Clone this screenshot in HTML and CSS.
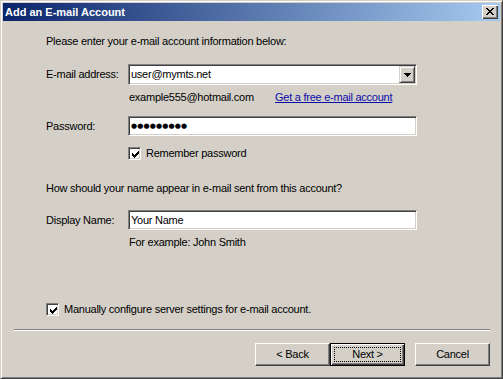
FILE: index.html
```html
<!DOCTYPE html>
<html lang="en">
<head>
  <meta charset="UTF-8" />
  <title>Add an E-mail Account</title>
  <link rel="stylesheet" href="styles.css">
</head>
<body>

  <div class="window">
    <div class="titlebar">
      <span class="title">Add an E-mail Account</span>
      <span class="close-btn">
        <svg width="8" height="7" viewBox="0 0 8 7" shape-rendering="crispEdges">
          <rect x="0" y="0" width="2" height="1"/><rect x="6" y="0" width="2" height="1"/>
          <rect x="1" y="1" width="2" height="1"/><rect x="5" y="1" width="2" height="1"/>
          <rect x="2" y="2" width="4" height="1"/>
          <rect x="3" y="3" width="2" height="1"/>
          <rect x="2" y="4" width="4" height="1"/>
          <rect x="1" y="5" width="2" height="1"/><rect x="5" y="5" width="2" height="1"/>
          <rect x="0" y="6" width="2" height="1"/><rect x="6" y="6" width="2" height="1"/>
        </svg>
      </span>
    </div>

    <div class="content">
      <div class="form">
        <p class="intro">Please enter your e-mail account information below:</p>

        <div class="field-row row-email">
          <label class="field-label" for="email">E-mail address:</label>
          <div class="combo">
            <input class="combo-input" id="email" type="text" value="user@mymts.net" />
            <span class="combo-btn">
              <svg width="7" height="4" viewBox="0 0 7 4" shape-rendering="crispEdges">
                <rect x="0" y="0" width="7" height="1"/>
                <rect x="1" y="1" width="5" height="1"/>
                <rect x="2" y="2" width="3" height="1"/>
                <rect x="3" y="3" width="1" height="1"/>
              </svg>
            </span>
          </div>
        </div>

        <div class="hint-row">
          <span class="example">example555@hotmail.com</span>
          <a class="link" href="#">Get a free e-mail account</a>
        </div>

        <div class="field-row row-password">
          <label class="field-label">Password:</label>
          <div class="textbox password">●●●●●●●●●</div>
        </div>

        <div class="check check-remember">
          <span class="checkbox">
            <svg width="7" height="7" viewBox="0 0 7 7" shape-rendering="crispEdges">
              <rect x="6" y="0" width="1" height="1"/>
              <rect x="5" y="1" width="2" height="1"/>
              <rect x="0" y="2" width="1" height="1"/><rect x="4" y="2" width="3" height="1"/>
              <rect x="0" y="3" width="2" height="1"/><rect x="3" y="3" width="3" height="1"/>
              <rect x="0" y="4" width="5" height="1"/>
              <rect x="1" y="5" width="3" height="1"/>
              <rect x="2" y="6" width="1" height="1"/>
            </svg>
          </span>
          <span>Remember password</span>
        </div>

        <p class="question">How should your name appear in e-mail sent from this account?</p>

        <div class="field-row row-display">
          <label class="field-label" for="display">Display Name:</label>
          <input class="textbox" id="display" type="text" value="Your Name" />
        </div>

        <p class="hint">For example: John Smith</p>

        <div class="check check-manual">
          <span class="checkbox">
            <svg width="7" height="7" viewBox="0 0 7 7" shape-rendering="crispEdges">
              <rect x="6" y="0" width="1" height="1"/>
              <rect x="5" y="1" width="2" height="1"/>
              <rect x="0" y="2" width="1" height="1"/><rect x="4" y="2" width="3" height="1"/>
              <rect x="0" y="3" width="2" height="1"/><rect x="3" y="3" width="3" height="1"/>
              <rect x="0" y="4" width="5" height="1"/>
              <rect x="1" y="5" width="3" height="1"/>
              <rect x="2" y="6" width="1" height="1"/>
            </svg>
          </span>
          <span>Manually configure server settings for e-mail account.</span>
        </div>
      </div>

      <div class="separator"></div>

      <div class="buttons">
        <button class="btn" type="button">&lt; Back</button>
        <button class="btn btn-default" type="button"><span class="focus">Next &gt;</span></button>
        <button class="btn btn-cancel" type="button">Cancel</button>
      </div>
    </div>
  </div>

</body>
</html>
```

FILE: styles.css
```css
html, body {
  margin: 0;
  padding: 0;
  background: #d4d0c8;
}
body {
  font-family: "Liberation Sans", Arial, sans-serif;
  font-size: 11px;
  line-height: 13px;
  letter-spacing: -0.25px;
  color: #000;
}
.window {
  width: 503px;
  height: 379px;
  box-sizing: border-box;
  background: #d4d0c8;
  border: 1px solid;
  border-color: #d4d0c8 #404040 #404040 #d4d0c8;
  box-shadow: inset 1px 1px #fff, inset -1px -1px #808080;
  padding: 2px;
}
.titlebar {
  height: 18px;
  display: flex;
  align-items: center;
  justify-content: space-between;
  padding: 0 2px;
  background: linear-gradient(to right, #0a246a, #a6caf0);
  color: #fff;
}
.title {
  font-weight: bold;
  font-size: 11px;
  letter-spacing: 0;
}
.close-btn {
  width: 16px;
  height: 14px;
  box-sizing: border-box;
  background: #d4d0c8;
  box-shadow: inset 1px 1px #fff, inset -1px -1px #404040, inset -2px -2px #808080;
  display: flex;
  align-items: center;
  justify-content: center;
  padding: 0 1px 1px 0;
}
.close-btn svg, .combo-btn svg, .checkbox svg {
  display: block;
  fill: #000;
}

.content {
  padding: 0 10px 0 11px;
}
.form {
  padding-left: 32px;
}
.intro, .question, .hint {
  margin: 0;
}
.intro {
  padding-top: 14px;
}
.field-row {
  display: grid;
  grid-template-columns: 82px 289px;
  align-items: center;
}
.row-email {
  margin-top: 16px;
}
.row-password {
  margin-top: 12px;
}
.row-display {
  margin-top: 15px;
}

.combo {
  height: 21px;
  box-sizing: border-box;
  background: #fff;
  border: 1px solid;
  border-color: #808080 #fff #fff #808080;
  box-shadow: inset 1px 1px #404040, inset -1px -1px #d4d0c8;
  padding: 1px;
  display: flex;
}
.combo-input {
  flex: 1;
  min-width: 0;
  border: none;
  outline: none;
  background: transparent;
  font: inherit;
  letter-spacing: inherit;
  padding: 0 0 0 1px;
  margin: 0;
}
.combo-btn {
  width: 16px;
  height: 17px;
  box-sizing: border-box;
  background: #d4d0c8;
  border: 1px solid;
  border-color: #d4d0c8 #404040 #404040 #d4d0c8;
  box-shadow: inset 1px 1px #fff, inset -1px -1px #808080;
  display: flex;
  align-items: center;
  justify-content: center;
}

.textbox {
  height: 20px;
  width: 289px;
  box-sizing: border-box;
  background: #fff;
  border: 1px solid;
  border-color: #808080 #fff #fff #808080;
  box-shadow: inset 1px 1px #404040, inset -1px -1px #d4d0c8;
  font: inherit;
  letter-spacing: inherit;
  color: #000;
  padding: 0 0 0 2px;
  margin: 0;
  outline: none;
}
.password {
  display: flex;
  align-items: center;
  font-family: "DejaVu Sans", sans-serif;
  font-size: 7px;
  letter-spacing: 0.15px;
}

.hint-row {
  margin-top: 6px;
  padding-left: 83px;
  display: flex;
}
.example {
  width: 146px;
}
.link {
  color: #0b0ba8;
  text-decoration: underline;
}
.hint {
  margin-top: 6px;
  padding-left: 83px;
}
.question {
  margin-top: 22px;
}

.check {
  display: flex;
  align-items: center;
  gap: 5px;
  height: 13px;
}
.check-remember {
  margin-top: 11px;
  margin-left: 82px;
}
.check-manual {
  margin-top: 54px;
}
.checkbox {
  width: 13px;
  height: 13px;
  box-sizing: border-box;
  background: #fff;
  border: 1px solid;
  border-color: #808080 #fff #fff #808080;
  box-shadow: inset 1px 1px #404040, inset -1px -1px #d4d0c8;
  padding: 3px 0 0 3px;
}

.separator {
  margin-top: 13px;
  border-top: 1px solid #808080;
  border-bottom: 1px solid #fff;
}
.buttons {
  margin-top: 12px;
  display: flex;
  justify-content: flex-end;
}
.btn {
  width: 75px;
  height: 23px;
  box-sizing: border-box;
  margin: 0;
  padding: 0;
  font: inherit;
  letter-spacing: inherit;
  color: #000;
  background: #d4d0c8;
  border: 1px solid;
  border-color: #fff #404040 #404040 #fff;
  box-shadow: inset -1px -1px #808080;
  display: flex;
  align-items: center;
  justify-content: center;
}
.btn-default {
  border: 1px solid #000;
  box-shadow: inset 1px 1px #fff, inset -1px -1px #404040, inset -2px -2px #808080;
  padding: 3px;
}
.focus {
  flex: 1;
  align-self: stretch;
  border: 1px dotted #000;
  display: flex;
  align-items: center;
  justify-content: center;
}
.btn-cancel {
  margin-left: 10px;
}
```
